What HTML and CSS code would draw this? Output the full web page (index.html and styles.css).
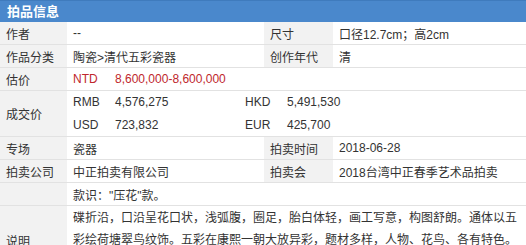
FILE: index.html
```html
<!DOCTYPE html>
<html lang="zh-CN">
<head>
<meta charset="utf-8">
<title>拍品信息</title>
<link rel="stylesheet" href="styles.css">
</head>
<body>
<div class="panel">
  <div class="panel-head">拍品信息</div>
  <table class="info">
    <colgroup>
      <col class="c-label1">
      <col class="c-value1">
      <col class="c-label2">
      <col class="c-value2">
    </colgroup>
    <tbody>
      <tr>
        <th>作者</th>
        <td>--</td>
        <th>尺寸</th>
        <td>口径12.7cm；高2cm</td>
      </tr>
      <tr>
        <th>作品分类</th>
        <td>陶瓷&gt;清代五彩瓷器</td>
        <th>创作年代</th>
        <td>清</td>
      </tr>
      <tr>
        <th>估价</th>
        <td colspan="3" class="est"><span class="cur">NTD</span>8,600,000-8,600,000</td>
      </tr>
      <tr class="deal">
        <th>成交价</th>
        <td colspan="3">
          <div class="prices">
            <div><span class="cur">RMB</span>4,576,275</div>
            <div><span class="cur">HKD</span>5,491,530</div>
            <div><span class="cur">USD</span>723,832</div>
            <div><span class="cur">EUR</span>425,700</div>
          </div>
        </td>
      </tr>
      <tr>
        <th>专场</th>
        <td>瓷器</td>
        <th>拍卖时间</th>
        <td>2018-06-28</td>
      </tr>
      <tr>
        <th>拍卖公司</th>
        <td>中正拍卖有限公司</td>
        <th>拍卖会</th>
        <td>2018台湾中正春季艺术品拍卖</td>
      </tr>
      <tr>
        <th></th>
        <td colspan="3">款识："压花"款。</td>
      </tr>
      <tr class="desc">
        <th>说明</th>
        <td colspan="3">碟折沿，口沿呈花口状，浅弧腹，圈足，胎白体轻，画工写意，构图舒朗。通体以五彩绘荷塘翠鸟纹饰。五彩在康熙一朝大放异彩，题材多样，人物、花鸟、各有特色。此碟画工细腻，色彩明艳，翠鸟栖于荷梗之上，生动传神，为康熙五彩之佳作。</td>
      </tr>
    </tbody>
  </table>
</div>
</body>
</html>
```
FILE: styles.css
```css
html, body {
  margin: 0;
  padding: 0;
  background: #ffffff;
}

body {
  font-family: "Liberation Sans", "Noto Sans CJK SC", Arial, sans-serif;
  font-size: 12px;
  color: #333333;
}

.panel {
  width: 526px;
}

.panel-head {
  height: 22px;
  line-height: 22px;
  background: #4a88cc;
  border-top: 1px solid #3f7bbd;
  box-sizing: border-box;
  color: #ffffff;
  font-weight: bold;
  font-size: 13px;
  padding-left: 7px;
}

.info {
  width: 526px;
  border-collapse: collapse;
  table-layout: fixed;
}

.c-label1 { width: 67px; }
.c-value1 { width: 197px; }
.c-label2 { width: 69px; }
.c-value2 { width: 193px; }

.info th,
.info td {
  height: 22px;
  padding: 0 6px;
  border-bottom: 1px solid #e2e2e2;
  text-align: left;
  vertical-align: middle;
  font-weight: normal;
  white-space: nowrap;
  overflow: hidden;
}

.info th {
  background: #f2f2f2;
  padding-left: 6px;
}

.info td {
  background: #ffffff;
  padding-left: 6px;
  padding-right: 4px;
}

.est {
  color: #c0272d;
}

.cur {
  display: inline-block;
  width: 42px;
}

.prices {
  display: grid;
  grid-template-columns: 172px auto;
  grid-auto-rows: 22.5px;
  align-items: center;
}

.deal td {
  height: 45px;
}

.desc td {
  white-space: normal;
  line-height: 22px;
  padding-top: 1px;
  padding-bottom: 1px;
  word-break: break-all;
}
```
